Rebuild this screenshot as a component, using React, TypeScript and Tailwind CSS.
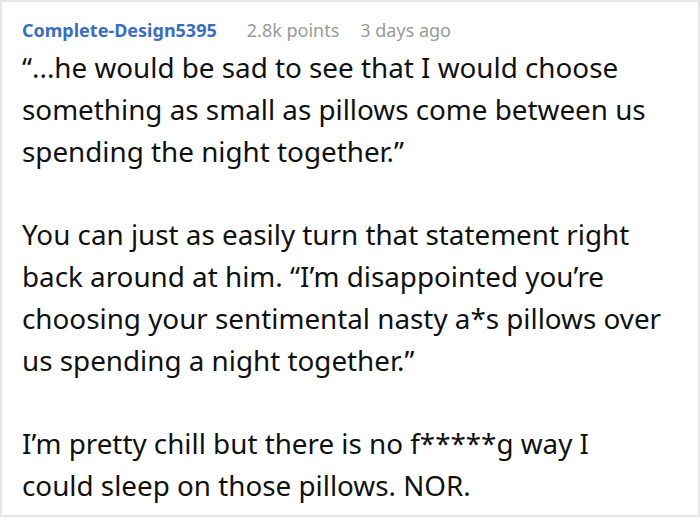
import React from "react";

export default function App() {
  return (
    <div className="w-[700px] h-[517px] bg-white border-2 border-[#e6e6e6] overflow-hidden" style={{ fontFamily: '"Noto Sans", sans-serif' }}>
      <div className="pl-[20px] pr-[36px] pt-[16px]">
        <div className="flex items-baseline text-[18px] leading-[24px]">
          <span className="font-bold text-[#3b6dbf]">Complete-Design5395</span>
          <span className="ml-[30px] text-[#9a9a9a]">2.8k points</span>
          <span className="ml-[21px] text-[#9a9a9a]">3 days ago</span>
        </div>
        <div className="text-[27.8px] leading-[41.8px] text-[#111] mt-[5px]">
          <p>“...he would be sad to see that I would choose something as small as pillows come between us spending the night together.”</p>
          <p className="mt-[41.8px]">You can just as easily turn that statement right back around at him. “I’m disappointed you’re choosing your sentimental nasty a*s pillows over us spending a night together.”</p>
          <p className="mt-[41.8px]">I’m pretty chill but there is no f*****g way I could sleep on those pillows. NOR.</p>
        </div>
      </div>
    </div>
  );
}
